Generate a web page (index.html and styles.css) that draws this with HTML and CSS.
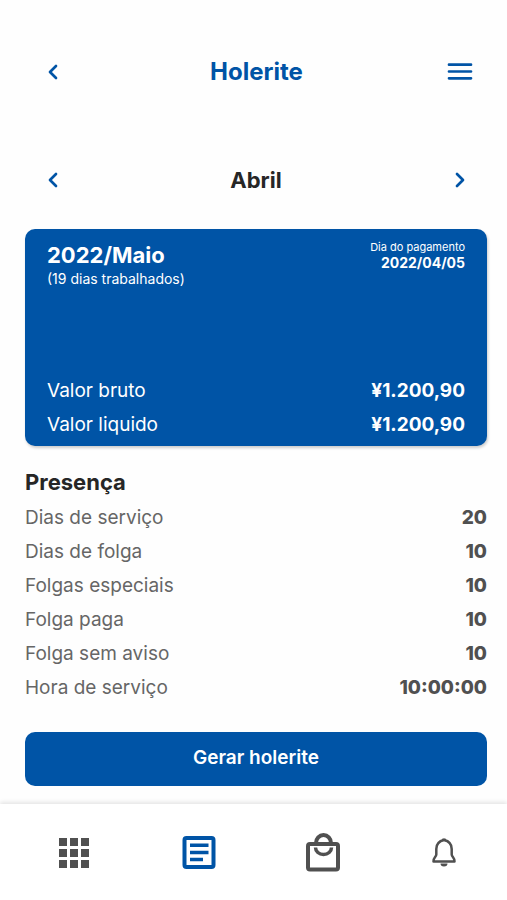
FILE: index.html
```html
<!DOCTYPE html>
<html lang="pt-BR">
<head>
    <meta charset="UTF-8">
    <meta name="viewport" content="width=device-width, initial-scale=1.0">
    <title>Holerite</title>
    <link rel="stylesheet" href="styles.css">
</head>
<body>

    <header class="topbar">
        <button type="button" class="icon-btn" aria-label="Voltar">
            <svg width="16" height="20" viewBox="0 0 16 20"><path d="M11 4l-6 6 6 6"/></svg>
        </button>
        <h1>Holerite</h1>
        <button type="button" class="icon-btn" aria-label="Menu">
            <svg width="26" height="20" viewBox="0 0 26 20"><path d="M2 2.700h22M2 9.500h22M2 16.300h22"/></svg>
        </button>
    </header>

    <main class="content">
        <div class="month">
            <button type="button" class="icon-btn" aria-label="Mês anterior">
                <svg width="16" height="20" viewBox="0 0 16 20"><path d="M11 4l-6 6 6 6"/></svg>
            </button>
            <h2>Abril</h2>
            <button type="button" class="icon-btn" aria-label="Próximo mês">
                <svg width="16" height="20" viewBox="0 0 16 20"><path d="M6 4l6 6-6 6"/></svg>
            </button>
        </div>

        <section class="card">
            <div class="card-top">
                <div>
                    <h2>2022/Maio</h2>
                    <p class="days">(19 dias trabalhados)</p>
                </div>
                <div class="payday">
                    <p>Dia do pagamento</p>
                    <strong>2022/04/05</strong>
                </div>
            </div>
            <dl class="list">
                <div class="row"><dt>Valor bruto</dt><dd>¥1.200,90</dd></div>
                <div class="row"><dt>Valor liquido</dt><dd>¥1.200,90</dd></div>
            </dl>
        </section>

        <section class="presence">
            <h2>Presença</h2>
            <dl class="list">
                <div class="row"><dt>Dias de serviço</dt><dd>20</dd></div>
                <div class="row"><dt>Dias de folga</dt><dd>10</dd></div>
                <div class="row"><dt>Folgas especiais</dt><dd>10</dd></div>
                <div class="row"><dt>Folga paga</dt><dd>10</dd></div>
                <div class="row"><dt>Folga sem aviso</dt><dd>10</dd></div>
                <div class="row"><dt>Hora de serviço</dt><dd>10:00:00</dd></div>
            </dl>
        </section>

        <button type="button" class="generate">Gerar holerite</button>
    </main>

    <nav class="tabbar">
        <a href="#inicio" aria-label="Início">
            <svg width="34" height="40" viewBox="0 0 34 40">
                <path class="fill" d="M2 6h8v8H2zM13 6h8v8h-8zM24 6h8v8h-8zM2 17h8v8H2zM13 17h8v8h-8zM24 17h8v8h-8zM2 28h8v8H2zM13 28h8v8h-8zM24 28h8v8h-8z"/>
            </svg>
        </a>
        <a href="#holerite" class="active" aria-label="Holerite">
            <svg width="34" height="40" viewBox="0 0 34 40">
                <rect class="frame" x="2.500" y="6" width="29" height="29" rx="2"/>
                <path class="lines" d="M8 13.200h18.500M8 20.400h18.500M8 27.600h13"/>
            </svg>
        </a>
        <a href="#loja" aria-label="Loja">
            <svg width="34" height="40" viewBox="0 0 34 40">
                <rect class="frame" x="2" y="12" width="30" height="25.500" rx="2"/>
                <path class="frame" d="M10 11a7.500 8 0 0 1 15 0"/>
                <path class="lines" d="M9.500 15.500a8 7 0 0 0 16 0"/>
            </svg>
        </a>
        <a href="#avisos" aria-label="Avisos">
            <svg width="26" height="40" viewBox="0 0 26 40">
                <path class="bell" d="M13 8C8.500 9 5.300 12 5.300 17v5.500c0 2.500-3 3-2.800 7h21c.2-4-2.800-4.500-2.800-7V17c0-5-3.200-8-7.700-9z"/>
                <path class="fill" d="M11.500 6.500h3l1 2h-5zM9.500 31.500h7a3.500 3 0 0 1-7 0z"/>
            </svg>
        </a>
    </nav>

</body>
</html>
```

FILE: styles.css
```css
* {
    box-sizing: border-box;
}
body {
    display: flex;
    flex-direction: column;
    min-height: 100vh;
    margin: 0;
    font-family: Inter, "Liberation Sans", sans-serif;
    color: #262626;
    background: #fefefe;
}
h1, h2, p, dl, dd {
    margin: 0;
}
h2 {
    font-size: 22px;
    line-height: 28px;
    font-weight: 700;
}
svg {
    display: block;
    fill: none;
    stroke: currentColor;
    stroke-width: 3;
    stroke-linecap: round;
    stroke-linejoin: round;
}
.topbar, .month {
    display: flex;
    align-items: center;
    justify-content: space-between;
}
.topbar {
    padding: 52px 27px 0 33px;
    color: #0054a6;
}
.topbar h1 {
    font-size: 24px;
    line-height: 40px;
    font-weight: 700;
}
.icon-btn {
    display: flex;
    justify-content: center;
    min-width: 40px;
    padding: 10px 0;
    border: none;
    background: none;
    color: #0054a6;
    cursor: pointer;
}
.icon-btn svg {
    stroke-width: 2.700;
}
.content {
    flex: 1;
    padding: 68px 20px 18px 25px;
}
.month {
    padding: 0 8px;
}
.card {
    display: flex;
    flex-direction: column;
    justify-content: space-between;
    min-height: 217px;
    margin-top: 29px;
    padding: 10px 22px 4px;
    border-radius: 10px;
    color: #fff;
    background: #0054a6;
    box-shadow: 1px 2px 3px rgba(0, 0, 0, 0.2);
}
.card-top {
    display: flex;
    justify-content: space-between;
}
.card-top h2 {
    line-height: 32px;
}
.days {
    font-size: 14px;
    line-height: 16px;
}
.payday {
    text-align: right;
    font-size: 11px;
    line-height: 16px;
}
.payday strong {
    display: block;
    font-size: 14px;
}
.row {
    display: flex;
    justify-content: space-between;
    font-size: 19px;
    line-height: 34px;
}
.row dd {
    font-weight: 700;
}
.presence {
    margin-top: 22px;
}
.presence .row {
    color: #666;
}
.presence dd {
    font-weight: 800;
    color: #505050;
}
.presence .list {
    margin-top: 5px;
}
.generate {
    display: block;
    width: 100%;
    margin-top: 27px;
    padding: 14px 0 16px;
    border: none;
    border-radius: 10px;
    font-family: inherit;
    font-size: 19px;
    line-height: 24px;
    font-weight: 600;
    color: #fff;
    background: #0054a6;
    cursor: pointer;
}
.tabbar {
    display: flex;
    justify-content: space-between;
    padding: 28px 50px 28px 57px;
    background: #fff;
    box-shadow: 0 -2px 4px rgba(0, 0, 0, 0.1);
}
.tabbar a {
    color: #505050;
}
.tabbar .active {
    color: #0054a6;
}
.tabbar .fill {
    fill: currentColor;
    stroke: none;
}
.tabbar .frame {
    stroke-width: 4;
}
.tabbar .lines {
    stroke-width: 3.500;
    stroke-linecap: butt;
}
.tabbar .bell {
    stroke-width: 2.500;
}
```
